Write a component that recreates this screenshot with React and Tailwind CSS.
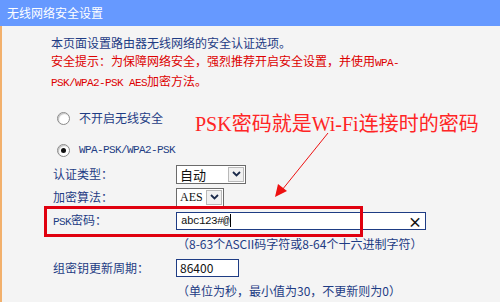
import React from 'react';

const cjk = "font-['Noto_Sans_CJK_SC','Liberation_Sans',sans-serif]";
const mono = "font-['Liberation_Mono','Noto_Sans_CJK_SC',monospace] text-[11px] tracking-[-0.6px]";

function Radio({ checked }) {
  return (
    <span className="flex h-[13px] w-[13px] items-center justify-center rounded-full border border-[#8a8a8a] bg-white shadow-[inset_1px_1px_1px_rgba(0,0,0,0.25)]">
      {checked && <span className="h-[5px] w-[5px] rounded-full bg-[#111]" />}
    </span>
  );
}

function Select({ value, width, valueClass }) {
  return (
    <div className={`flex h-[19px] items-stretch border border-[#6b6b6b] bg-white ${width}`}>
      <span className={`flex-1 pl-[3px] leading-[17px] text-[#111] ${valueClass}`}>{value}</span>
      <span className="m-px flex w-[16px] items-center justify-center border border-[#b9b9b9] bg-[#f1f1f1]">
        <svg width="9" height="6" viewBox="0 0 9 6">
          <path d="M1 1 L4.5 4.5 L8 1" fill="none" stroke="#1a2a4a" strokeWidth="1.8" />
        </svg>
      </span>
    </div>
  );
}

function Row({ label, children, className = '' }) {
  return (
    <div className={`flex items-center pl-[51px] ${className}`}>
      <span className="w-[123px] text-[12px] text-[#1e3c84]">{label}</span>
      {children}
    </div>
  );
}

export default function App() {
  return (
    <div className={`relative h-[302px] w-[500px] overflow-hidden bg-[#f4f4f4] ${cjk}`}>
      <div className="h-[26px] bg-[#6699ff] pl-[7px] text-[12px] leading-[25px] text-white">无线网络安全设置</div>

      <div className="h-[276px] border-l-2 border-[#f2b06c]">
        <div className="pl-[49px] pt-[8px] text-[12px] leading-[18px]">
          <p className="text-[#1e3c84]">本页面设置路由器无线网络的安全认证选项。</p>
          <p className="text-[#dd0000]">
            安全提示：为保障网络安全，强烈推荐开启安全设置，并使用<span className={mono}>WPA-</span>
          </p>
          <p className="text-[#dd0000]">
            <span className={mono}>PSK/WPA2-PSK AES</span>加密方法。
          </p>
        </div>

        <div className="mt-[16px] flex h-[20px] items-center gap-[9px] pl-[55px] text-[12px] text-[#1e3c84]">
          <Radio />
          <span>不开启无线安全</span>
        </div>

        <div className="mt-[12px] flex h-[20px] items-center gap-[9px] pl-[55px] text-[#1e3c84]">
          <Radio checked />
          <span className={mono}>WPA-PSK/WPA2-PSK</span>
        </div>

        <Row label="认证类型：" className="mt-[4px] h-[20px]">
          <Select value="自动" width="w-[70px]" valueClass="text-[13px]" />
        </Row>

        <Row label="加密算法：" className="mt-[3px] h-[20px]">
          <Select value="AES" width="w-[48px]" valueClass="font-['Liberation_Serif',serif] text-[12px]" />
        </Row>

        <Row label={<span><span className={mono}>PSK</span>密码：</span>} className="relative mt-[5px] h-[18px]">
          <div className="flex h-[18px] w-[250px] items-center justify-between border border-[#1e3c84] bg-white pl-[4px] pr-[3px]">
            <span className={`${mono} text-[#111]`}>
              abc123#@<span className="ml-px inline-block h-[13px] w-px bg-black align-middle" />
            </span>
            <span className="text-[14px] font-bold leading-none text-[#111]">×</span>
          </div>
          <div className="absolute left-[42px] top-[-6px] h-[31px] w-[319px] border-[3px] border-[#e0000f]" />
        </Row>

        <p className="mt-[6px] h-[16px] pl-[175px] text-[12px] leading-[16px] text-[#1e3c84]">（8-63个ASCII码字符或8-64个十六进制字符）</p>

        <Row label="组密钥更新周期：" className="mt-[7px] h-[18px]">
          <div className="h-[18px] w-[63px] border border-[#1e3c84] bg-white pl-[3px] text-[12px] leading-[16px] text-[#111]">86400</div>
        </Row>

        <p className="mt-[6px] h-[16px] pl-[175px] text-[12px] leading-[16px] text-[#1e3c84]">（单位为秒，最小值为30，不更新则为0）</p>
      </div>

      <div className="absolute left-[195px] top-[112px] font-['Liberation_Serif','Noto_Sans_CJK_SC',serif] text-[20px] leading-[24px] text-[#ff2525]">
        PSK密码就是Wi-Fi连接时的密码
      </div>

      <svg className="absolute left-0 top-0" width="500" height="302" viewBox="0 0 500 302">
        <line x1="328" y1="133" x2="282" y2="190" stroke="#ee1111" strokeWidth="1" />
        <path d="M275 197 L278 184 L287 191 Z" fill="#ee1111" />
      </svg>
    </div>
  );
}
